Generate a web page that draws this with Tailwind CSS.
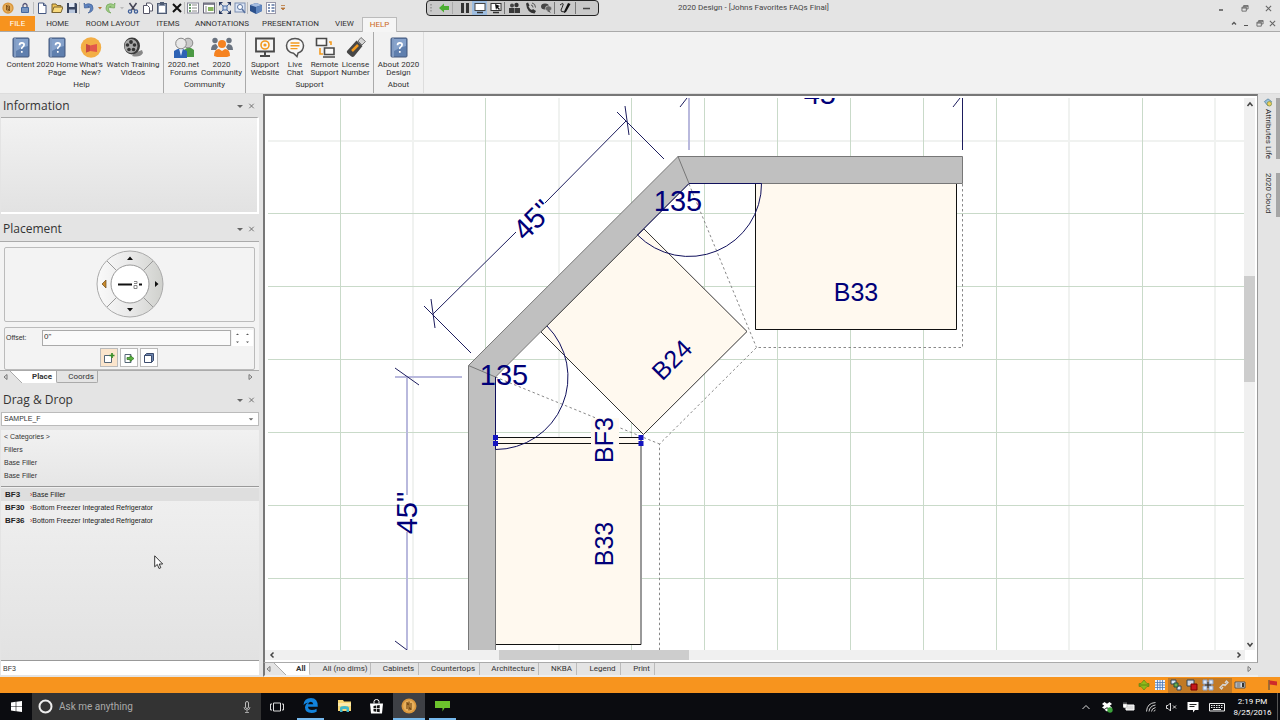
<!DOCTYPE html>
<html lang="en">
<head>
<meta charset="utf-8">
<title>2020 Design - [Johns Favorites FAQs Final]</title>
<script src="https://cdn.jsdelivr.net/npm/@tailwindcss/browser@4"></script>
</head>
<body class="flex h-screen flex-col overflow-hidden bg-[#e4e4e4] font-['Roboto','Noto_Sans',sans-serif] text-[8px] leading-[8px] text-[#333]">

<svg class="hidden" aria-hidden="true">
  <symbol id="book" viewBox="0 0 18 21"><rect x="1" y="1" width="16" height="19" rx="1" fill="#5f7fae" stroke="#44597d"/><path d="M3 1v19" stroke="#a7bbd8"/><path d="M4 2h12v7q-6 1-12 5z" fill="#86a2cb"/><path d="M7.500 8.200q0-2.400 2.300-2.400t2.300 2q0 1.300-1.300 2.100t-1 2.100M9.800 14v1.700" stroke="#fff" stroke-width="1.700" fill="none"/></symbol>
  <symbol id="coin" viewBox="0 0 16 16"><circle cx="8" cy="8" r="7.500" fill="#d9963c"/><circle cx="8" cy="8" r="5.800" fill="#e8b05c"/><path d="M6 4v7M8 3.500v9M10 5v7M6 5l2 2M8 9l2 3" stroke="#7a4d17" stroke-width="1.200" fill="none"/></symbol>
  <symbol id="restore" viewBox="0 0 8 8"><path d="M2.500 2.500v-2h5v4h-2M.5 2.500h5v4.500h-5zM.5 3.500h5M2.500 1.500h5" fill="none" stroke="#666"/></symbol>
  <symbol id="cross" viewBox="0 0 8 8"><path d="M1 1l6 6M7 1L1 7" fill="none" stroke="#666" stroke-width="1.200"/></symbol>
  <symbol id="down" viewBox="0 0 8 8"><path d="M1 3h6L4 6z" fill="#666"/></symbol>
</svg>

<!-- Title bar -->
<header class="flex h-4 shrink-0 items-center">
  <div class="flex w-[426px] shrink-0 items-center">
    <button aria-label="Application menu" class="flex w-4 justify-center"><svg class="h-3 w-3"><use href="#coin"/></svg></button>
    <button aria-label="Lock" class="flex w-[18px] justify-center border-r border-[#bbb]"><svg class="h-3 w-3" viewBox="0 0 12 12"><path d="M4 5V3q2-3 4 0v2" fill="none" stroke="#557" stroke-width="1.300"/><rect x="2" y="5" width="8" height="6" rx="1" fill="#4468a0"/><path d="M3 7h6M3 9h6" stroke="#a9c0e2"/></svg></button>
    <button aria-label="New" class="flex w-[15px] justify-center"><svg class="h-3 w-3" viewBox="0 0 12 12"><path d="M2.500 1h5l2.500 2.500V11.500h-7.500zM7.500 1v2.500H10" fill="#fff" stroke="#445780"/></svg></button>
    <button aria-label="Open" class="flex w-[15px] justify-center"><svg class="h-3 w-3" viewBox="0 0 12 12"><path d="M1 10.500V2h4l1 1.500h4V5" fill="#f3c553" stroke="#7a6430"/><path d="M1 10.500L3 5h9l-2 5.500z" fill="#f8d97b" stroke="#7a6430"/></svg></button>
    <button aria-label="Save" class="flex w-4 justify-center border-r border-[#bbb]"><svg class="h-3 w-3" viewBox="0 0 12 12"><path d="M1 1h9l1 1v9H1z" fill="#38455f"/><path d="M3 1h5.500v4H3z" fill="#dfe6f2"/><path d="M3 7.500h6V11H3z" fill="#b9c7dd"/></svg></button>
    <button aria-label="Undo" class="flex w-4 justify-center"><svg class="h-3 w-3" viewBox="0 0 12 12"><path d="M2 1l.5 5 5-.5-1.700-1.200Q9 4 8.500 7T6 11q5-1 5-5T7 1.800Q5 1.600 3.600 2.700z" fill="#5f84c1" stroke="#3d5d94" stroke-width=".7"/></svg></button>
    <button aria-label="Undo list" class="flex w-[7px] justify-center"><svg class="h-2 w-2 shrink-0" viewBox="0 0 8 8"><path d="M2 3h4L4 5.500z" fill="#b8763a"/></svg></button>
    <button aria-label="Redo" class="flex w-[15px] justify-center"><svg class="h-3 w-3" viewBox="0 0 12 12"><path d="M10 1l-.5 5-5-.5 1.700-1.200Q3 4 3.500 7T6 11Q1 10 1 6t4-4.200Q7 1.600 8.400 2.700z" fill="#9fce84" stroke="#6ea354" stroke-width=".7"/></svg></button>
    <button aria-label="Redo list" class="flex w-[7px] justify-center"><svg class="h-2 w-2 shrink-0" viewBox="0 0 8 8"><path d="M2 3h4L4 5.500z" fill="#bbb"/></svg></button>
    <button aria-label="Cut" class="flex w-[15px] justify-center"><svg class="h-3 w-3" viewBox="0 0 12 12"><path d="M2.500 1l5 7M9.500 1l-5 7" stroke="#445" stroke-width="1.500"/><circle cx="3" cy="9.500" r="1.600" fill="none" stroke="#3e5e98" stroke-width="1.300"/><circle cx="9" cy="9.500" r="1.600" fill="none" stroke="#3e5e98" stroke-width="1.300"/></svg></button>
    <button aria-label="Copy" class="flex w-[15px] justify-center"><svg class="h-3 w-3" viewBox="0 0 12 12"><path d="M4.500 1h4L10.500 3v6h-6z" fill="#fff" stroke="#556"/><path d="M1.500 3.500h4L7.500 5.500v6h-6z" fill="#fff" stroke="#556"/></svg></button>
    <button aria-label="Paste" class="flex w-[14px] justify-center"><svg class="h-3 w-3" viewBox="0 0 12 12"><rect x="1.500" y="1.500" width="9" height="10" fill="#8c98ad" stroke="#4e5b73"/><rect x="3" y="4" width="6" height="6.500" fill="#fff"/><rect x="4" y="0" width="4" height="3" fill="#4e5b73"/></svg></button>
    <button aria-label="Delete" class="flex w-4 justify-center border-r border-[#bbb]"><svg class="h-3 w-3" viewBox="0 0 12 12"><path d="M2 2l8 8M10 2l-8 8" stroke="#111" stroke-width="2"/></svg></button>
    <button aria-label="Items list" class="flex w-4 justify-center"><svg class="h-3 w-3" viewBox="0 0 12 12"><rect x=".5" y="1" width="11" height="10" fill="#fff" stroke="#889"/><path d="M2 3h2M2 6h2M2 9h2" stroke="#3c7d3c" stroke-width="1.500"/><path d="M5 3h5M5 6h5M5 9h5" stroke="#888"/></svg></button>
    <button aria-label="Properties" class="flex w-4 justify-center border-r border-[#bbb]"><svg class="h-3 w-3" viewBox="0 0 12 12"><rect x=".5" y="1" width="11" height="10" fill="#fff" stroke="#667"/><path d="M1 2h10" stroke="#667" stroke-width="1.500"/><rect x="5" y="5" width="5.500" height="4" fill="#86b45e"/><path d="M2 5h2M2 7h2M2 9h2" stroke="#888"/></svg></button>
    <button aria-label="Zoom extents" class="flex w-[15px] justify-center"><svg class="h-3 w-3" viewBox="0 0 12 12"><path d="M2 2l8 8M10 2l-8 8" stroke="#5570a0"/><rect x="4" y="4" width="4" height="4" fill="#cfdcf2" stroke="#4468a0"/><path d="M0 0h4L0 4zM12 0v4L8 0zM0 12V8l4 4zM12 12H8l4-4z" fill="#26365c"/></svg></button>
    <button aria-label="Zoom window" class="flex w-4 justify-center border-r border-[#bbb]"><svg class="h-3 w-3" viewBox="0 0 12 12"><rect x="1" y="1" width="10" height="9" fill="#dbe5f5" stroke="#7a8db0"/><circle cx="6" cy="5" r="2.500" fill="#fff" stroke="#5a73a0"/><path d="M8 7l3 4" stroke="#5a73a0" stroke-width="1.500"/></svg></button>
    <button aria-label="3D view" class="flex w-4 justify-center"><svg class="h-3 w-3" viewBox="0 0 12 12"><path d="M0 3l6-2 6 2v6l-6 3-6-3z" fill="#2c518c"/><path d="M0 3l6-2 6 2-6 2z" fill="#a4bce0"/><path d="M6 5v7l6-3V3z" fill="#5f86bf"/></svg></button>
    <button aria-label="Catalog list" class="flex w-[14px] justify-center"><svg class="h-3 w-3" viewBox="0 0 12 12"><rect x="1.500" y=".5" width="9" height="11" fill="#fff" stroke="#99a"/><path d="M3 3h2M3 6h2M3 9h2M6.500 3h3M6.500 6h3M6.500 9h3" stroke="#5a73a0" stroke-width="1.300"/></svg></button>
    <button aria-label="Customize" class="flex w-[10px] justify-center"><svg class="h-2 w-2" viewBox="0 0 8 8"><path d="M2 1.500h4M2 4h4L4 6z" stroke="#b8763a" stroke-width=".8" fill="#b8763a"/></svg></button>
  </div>
  <div class="flex h-4 w-[173px] shrink-0 items-center rounded-[4px] border border-[#222] bg-[#c9c9c9]">
    <svg class="h-3 w-[9px]" viewBox="0 0 9 12"><path d="M4 2v1.500M4 5v1.500M4 8v1.500" stroke="#777"/></svg>
    <button aria-label="Back" class="flex w-[17px] justify-center border-r border-[#aaa]"><svg class="h-3 w-3" viewBox="0 0 12 12"><path d="M1 6l5-4.500V4h5v4H6v2.500z" fill="#4cae32"/></svg></button>
    <button aria-label="Pause" class="flex w-[19px] justify-center pl-1"><svg class="h-3 w-3" viewBox="0 0 12 12"><path d="M2 1h3v10H2zM7 1h3v10H7z" fill="#333"/></svg></button>
    <button aria-label="Show screen" class="flex h-[14px] w-[15px] items-center justify-center bg-[#9dbde0]"><svg class="h-3 w-3" viewBox="0 0 12 12"><rect x="1" y="1.500" width="10" height="7" fill="#fff" stroke="#444"/><path d="M3 10.500h6" stroke="#333" stroke-width="1.500"/></svg></button>
    <button aria-label="Give control" class="flex w-[18px] justify-center border-r border-[#777]"><svg class="h-3 w-3" viewBox="0 0 12 12"><rect x="1" y="1.500" width="10" height="7" fill="#fff" stroke="#333"/><path d="M3 10.500h6" stroke="#333" stroke-width="1.500"/><path d="M5 2l5 2-2 1 2 2-1 1-2-2-1 2z" fill="#111"/></svg></button>
    <button aria-label="Attendees" class="flex w-[18px] justify-center"><svg class="h-3 w-3" viewBox="0 0 12 12"><circle cx="4" cy="3.500" r="2" fill="#444"/><circle cx="8.500" cy="3" r="2.200" fill="#333"/><path d="M1 11V6h5v5zM6.500 6H12v5H6.500z" fill="#3a3a3a"/></svg></button>
    <button aria-label="Audio" class="flex w-[15px] justify-center"><svg class="h-3 w-3" viewBox="0 0 12 12"><path d="M1 1.500l2-1 1.500 3-1 1Q4.500 7 7 8l1-1L11 9l-1.500 2.500Q2 11 1 1.500z" fill="#333"/><path d="M6 3q2 0 2 2.500M7 1q3.500.5 3.500 4.500" fill="none" stroke="#555"/></svg></button>
    <button aria-label="Chat" class="flex w-[17px] justify-center border-r border-[#777]"><svg class="h-3 w-3" viewBox="0 0 12 12"><ellipse cx="5" cy="4.500" rx="4" ry="3" fill="#444"/><ellipse cx="8.500" cy="6.500" rx="3.200" ry="2.700" fill="#666" stroke="#ddd" stroke-width=".6"/><path d="M9 8l2 3-4-2z" fill="#555"/></svg></button>
    <button aria-label="Draw" class="flex w-[21px] justify-center border-r border-[#777]"><svg class="h-3 w-3" viewBox="0 0 12 12"><path d="M1 3q4-3 3 0T2 8t4 2" fill="none" stroke="#222"/><path d="M9 1l2.500 1L7 10l-2 1 .5-2.500z" fill="#111"/></svg></button>
    <button aria-label="Minimize toolbar" class="flex w-5 justify-center"><svg class="h-3 w-3" viewBox="0 0 12 12"><path d="M3 6.500h7" stroke="#444" stroke-width="1.500"/></svg></button>
  </div>
  <h1 class="pl-[79px] text-[8px] leading-4 whitespace-nowrap text-[#444]">2020 Design - [Johns Favorites FAQs Final]</h1>
  <div class="ml-auto flex items-center gap-4 pr-2">
    <button aria-label="Minimize"><svg class="h-2 w-2" viewBox="0 0 8 8"><path d="M2 6h4" stroke="#555" stroke-width="1.500"/></svg></button>
    <button aria-label="Restore"><svg class="h-[7px] w-2"><use href="#restore"/></svg></button>
    <button aria-label="Close"><svg class="h-[7px] w-[7px]"><use href="#cross"/></svg></button>
  </div>
</header>

<!-- Ribbon tabs -->
<nav class="flex h-4 shrink-0 items-end border-b border-[#aaa] text-center whitespace-nowrap" role="tablist">
  <button role="tab" class="h-[15px] w-[35px] bg-[#f7931e] text-white">FILE</button>
  <button role="tab" class="h-[15px] w-[45px]">HOME</button>
  <button role="tab" class="h-[15px] w-[66px]">ROOM LAYOUT</button>
  <button role="tab" class="h-[15px] w-11">ITEMS</button>
  <button role="tab" class="h-[15px] w-16">ANNOTATIONS</button>
  <button role="tab" class="h-[15px] w-[73px]">PRESENTATION</button>
  <button role="tab" class="h-[15px] w-[35px]">VIEW</button>
  <button role="tab" aria-selected="true" class="-mb-px h-[15px] w-[35px] border border-b-0 border-[#bbb] bg-[#f5f5f5] text-[#cc6a1c]">HELP</button>
  <div class="ml-auto flex h-4 items-center gap-[5px] pr-1">
    <button aria-label="Collapse ribbon"><svg class="h-2 w-2" viewBox="0 0 8 8"><path d="M2 5.500L4 3.500l2 2" fill="none" stroke="#555" stroke-width="1.300"/></svg></button>
    <button aria-label="Minimize document"><svg class="h-2 w-2" viewBox="0 0 8 8"><path d="M1 6.500h4" stroke="#555"/></svg></button>
    <button aria-label="Restore document"><svg class="h-[7px] w-2"><use href="#restore"/></svg></button>
    <button aria-label="Close document"><svg class="h-[7px] w-[7px]"><use href="#cross"/></svg></button>
  </div>
</nav>

<!-- Ribbon -->
<section class="flex h-[62px] shrink-0 border-b border-[#ddd] bg-[#f2f2f2] text-center whitespace-nowrap">
  <div class="flex w-[164px] flex-col border-r border-[#aaa]">
    <div class="flex h-[49px] pt-[5px]">
      <button class="flex w-[39px] flex-col items-center gap-[3px] pl-[2px]"><svg class="h-[21px] w-[18px]"><use href="#book"/></svg><span>Content</span></button>
      <button class="flex w-9 flex-col items-center gap-[3px]"><svg class="h-[21px] w-[18px]"><use href="#book"/></svg><span>2020 Home<br>Page</span></button>
      <button class="flex w-8 flex-col items-center gap-[3px]"><svg class="h-[21px] w-[22px]" viewBox="0 0 22 21"><circle cx="11" cy="10.500" r="10.200" fill="#f3ae45"/><path d="M6 7l4 1.500 7-1.500v8l-7-1-4 1.500z" fill="#e2574c"/><path d="M6 7l4 1.500v5.500l-4 1.500z" fill="#c94a42"/></svg><span>What's<br>New?</span></button>
      <button class="flex w-[52px] flex-col items-center gap-[3px]"><svg class="h-[21px] w-[22px]" viewBox="0 0 22 21"><path d="M10 19q8 2 11-3l-1-3-8 3z" fill="#888"/><ellipse cx="10" cy="9" rx="8" ry="8.500" fill="#3c3c3c"/><ellipse cx="9" cy="9" rx="6.500" ry="7" fill="#a9a9a9"/><circle cx="9" cy="5" r="1.900" fill="#333"/><circle cx="5.500" cy="8" r="1.800" fill="#333"/><circle cx="12.500" cy="8" r="1.800" fill="#333"/><circle cx="7" cy="12.500" r="1.800" fill="#333"/><circle cx="11.500" cy="12.500" r="1.800" fill="#333"/></svg><span>Watch Training<br>Videos</span></button>
    </div>
    <span>Help</span>
  </div>
  <div class="flex w-[82px] flex-col border-r border-[#aaa]">
    <div class="flex h-[49px] pt-[5px] pl-px">
      <button class="flex w-[37px] flex-col items-center gap-[3px]"><svg class="h-[21px] w-[22px]" viewBox="0 0 22 21"><path d="M11 20v-7q5-5 10 0v7z" fill="#4c9a45"/><circle cx="15" cy="6" r="4.800" fill="#c9c9c9" stroke="#888"/><path d="M1 21v-7q6-5 13 0v7z" fill="#2e63b5"/><path d="M6 11.500h4L8 19z" fill="#dce8fa"/><circle cx="8" cy="6.500" r="5.300" fill="#e8e8e8" stroke="#888"/></svg><span>2020.net<br>Forums</span></button>
      <button class="flex w-[39px] flex-col items-center gap-[3px]"><svg class="h-[21px] w-[22px]" viewBox="0 0 22 21"><g fill="#6a7380"><circle cx="4" cy="3.500" r="2.700"/><circle cx="18" cy="3.500" r="2.700"/><path d="M0 13q0-6 5-6l2 3-2 3zM22 13q0-6-5-6l-2 3 2 3z"/></g><circle cx="11" cy="7" r="4" fill="#f58220"/><path d="M3 19q0-7 5-7l3 2 3-2q5 0 5 7l-3 1H6z" fill="#f58220"/></svg><span>2020<br>Community</span></button>
    </div>
    <span>Community</span>
  </div>
  <div class="flex w-32 flex-col border-r border-[#aaa]">
    <div class="flex h-[49px] pt-[5px] pl-[2px]">
      <button class="flex w-[34px] flex-col items-center gap-[3px]"><svg class="h-[21px] w-5" viewBox="0 0 20 21"><path d="M1 1.500h18v13H1z" fill="#f6f6f6" stroke="#4a4a4a" stroke-width="1.800"/><path d="M10 15v3M5 19h10" stroke="#4a4a4a" stroke-width="2"/><circle cx="10" cy="8" r="4" fill="none" stroke="#f39a1e" stroke-width="1.600"/><circle cx="10" cy="8" r="1.600" fill="#f39a1e"/></svg><span>Support<br>Website</span></button>
      <button class="flex w-[26px] flex-col items-center gap-[3px]"><svg class="h-[21px] w-5" viewBox="0 0 20 21"><path d="M10 1.500c5 0 8.500 3 8.500 7S16 15 13 16l-1 3.500-3.500-3.300C4 15.500 1.500 12.500 1.500 8.500s3.500-7 8.500-7z" fill="#f8f8f8" stroke="#555" stroke-width="1.500"/><path d="M5.500 6h9M5.500 8.800h9M5.500 11.600h7" stroke="#f39a1e" stroke-width="1.400"/></svg><span>Live<br>Chat</span></button>
      <button class="flex w-[33px] flex-col items-center gap-[3px]"><svg class="h-[21px] w-5" viewBox="0 0 20 21"><path d="M1.500 1.500h10v7h-10zM9.500 11h9.500v6.500H9.500z" fill="#fafafa" stroke="#4a4a4a" stroke-width="1.600"/><path d="M8 20h12" stroke="#4a4a4a" stroke-width="1.500"/><path d="M5 11v6h3M14 5h2v3" fill="none" stroke="#f39a1e" stroke-width="1.600"/></svg><span>Remote<br>Support</span></button>
      <button class="flex w-[29px] flex-col items-center gap-[3px]"><svg class="h-[21px] w-5" viewBox="0 0 20 21"><path d="M12 4l3-3.500 4.500 4L16 8z" fill="#d5d5d5" stroke="#777"/><path d="M1 14L10.500 3.500l6 5.500L8 19.500q-1.500 1-3-.3L1.300 16q-.8-1-.3-2z" fill="#474747"/><path d="M6 14l6-6" stroke="#f39a1e" stroke-width="2.500"/></svg><span>License<br>Number</span></button>
    </div>
    <span>Support</span>
  </div>
  <div class="flex w-[50px] flex-col border-r border-[#ddd]">
    <div class="flex h-[49px] justify-center pt-[5px]">
      <button class="flex flex-col items-center gap-[3px]"><svg class="h-[21px] w-[18px]"><use href="#book"/></svg><span>About 2020<br>Design</span></button>
    </div>
    <span>About</span>
  </div>
</section>

<!-- Work area -->
<main class="flex min-h-0 flex-1">
  <aside class="flex w-[263px] shrink-0 flex-col pr-1">
    <div class="flex h-[23px] shrink-0 items-center pl-[3px]"><h2 class="flex-1 font-['Open_Sans',sans-serif] text-[12px] leading-4">Information</h2>
      <button aria-label="Information menu" class="mr-1"><svg class="h-2 w-2"><use href="#down"/></svg></button><button aria-label="Close Information" class="mr-1"><svg class="h-[6px] w-[7px]"><use href="#cross"/></svg></button></div>
    <div class="ml-px h-[97px] shrink-0 border-t border-r-2 border-b-2 border-t-[#aaa] border-r-white border-b-white bg-linear-to-b from-[#f2f2f2] to-[#e2e2e2]"></div>

    <div class="mt-[3px] flex h-6 shrink-0 items-center pl-[3px]"><h2 class="flex-1 font-['Open_Sans',sans-serif] text-[12px] leading-4">Placement</h2>
      <button aria-label="Placement menu" class="mr-1"><svg class="h-2 w-2"><use href="#down"/></svg></button><button aria-label="Close Placement" class="mr-1"><svg class="h-[6px] w-[7px]"><use href="#cross"/></svg></button></div>
    <div class="flex h-[129px] shrink-0 flex-col gap-[5px] border-t border-[#aaa] bg-[#f3f3f3] px-1 pt-[5px]">
      <div class="flex h-[75px] justify-center rounded-[2px] border border-[#bbb] pt-[2px]">
        <svg class="h-[68px] w-[68px]" viewBox="0 0 68 68">
          <defs><linearGradient id="dial" x1="0" x2="1"><stop offset="0" stop-color="#fafafa"/><stop offset=".5" stop-color="#e9e9e9"/><stop offset="1" stop-color="#cfd0cc"/></linearGradient></defs>
          <circle cx="34" cy="34" r="33" fill="url(#dial)" stroke="#aaa"/><circle cx="34" cy="34" r="19" fill="#fff" stroke="#999"/>
          <path d="M11 11l9.500 9.500M57 11l-9.500 9.500M11 57l9.500-9.500M57 57l-9.500-9.500" stroke="#999"/>
          <path d="M31 10h6l-3-3.500zM31 58h6l-3 3.500zM59 31v6l3.500-3z" fill="#111"/><path d="M10 30v8l-4-4z" fill="#c98a2c" stroke="#6b4a1c" stroke-width=".7"/>
          <path d="M22 34.500h14M43 34.500h3" stroke="#111" stroke-width="1.800"/><path d="M38 31.500h3v2h-3M38 35.500h3v3h-3z" fill="none" stroke="#888"/>
        </svg>
      </div>
      <div class="h-[43px] rounded-[2px] border border-[#bbb] px-px pt-[2px] font-['Liberation_Sans',sans-serif]">
        <div class="flex items-start">
          <label for="offset" class="w-[36px] pt-1 text-[7px]">Offset:</label>
          <input id="offset" value="0&quot;" class="h-4 min-w-0 flex-1 border border-[#aaa] bg-[#fafafa] px-px pb-1 text-[8px]">
          <button aria-label="Step offset" class="ml-px flex h-4 w-[21px] items-center justify-center bg-white"><svg class="h-3 w-5" viewBox="0 0 20 12"><path d="M3 3h3L4.500 1.500zM3 9.500h3L4.500 11zM13 3h3L14.500 1.500zM13 9.500h3L14.500 11z" fill="#555"/></svg></button>
        </div>
        <div class="mt-[2px] flex justify-center gap-[2px] pr-[2px]">
          <button aria-label="Add item" class="flex h-[19px] w-[18px] items-center justify-center border border-[#bbb] bg-[#fbe5cc]"><svg class="h-3 w-3" viewBox="0 0 12 12"><path d="M1.500 3.500h7v7h-7z" fill="#fff" stroke="#567"/><path d="M9 1v5M6.500 3.500h5" fill="none" stroke="#3a8f2a" stroke-width="1.700"/></svg></button>
          <button aria-label="Insert item" class="flex h-[19px] w-[18px] items-center justify-center border border-[#bbb] bg-white"><svg class="h-3 w-3" viewBox="0 0 12 12"><path d="M2 2.500h6v8H2z" fill="#fff" stroke="#567"/><path d="M4 5.500h3V3.500L11 6.500l-4 3v-2H4z" fill="#59b23f" stroke="#2d6e1c" stroke-width=".7"/></svg></button>
          <button aria-label="Replace item" class="flex h-[19px] w-[18px] items-center justify-center border border-[#bbb] bg-white"><svg class="h-3 w-3" viewBox="0 0 12 12"><path d="M1.500 3.500l2-2h7v7l-2 2z" fill="#6f87b0" stroke="#3c4c6e"/><path d="M1.500 3.500h7v7h-7z" fill="#fff" stroke="#3c4c6e"/></svg></button>
        </div>
      </div>
    </div>
    <div class="flex h-[13px] shrink-0 items-center border-t border-[#aaa] whitespace-nowrap" role="tablist">
      <svg class="h-3 w-[10px]" viewBox="0 0 10 12"><path d="M7 3.500v5L4 6z" fill="none" stroke="#777"/></svg>
      <button role="tab" aria-selected="true" class="flex h-full items-center bg-white pr-1"><svg class="h-3 w-[22px]" viewBox="0 0 22 12"><path d="M0 0l12 12H0z" fill="#e4e4e4" /><path d="M0 0l12 12" stroke="#aaa"/></svg><b class="font-bold">Place</b></button>
      <button role="tab" class="h-full w-[42px] rounded-b-[2px] border-x border-b border-[#aaa] pl-2">Coords</button>
      <svg class="mr-1 ml-auto h-3 w-2" viewBox="0 0 8 12"><path d="M2 3.500v5L5 6z" fill="none" stroke="#777"/></svg>
    </div>

    <div class="mt-1 flex h-[25px] shrink-0 items-center pl-[3px]"><h2 class="flex-1 font-['Open_Sans',sans-serif] text-[12px] leading-4">Drag &amp; Drop</h2>
      <button aria-label="Drag and Drop menu" class="mr-1"><svg class="h-2 w-2"><use href="#down"/></svg></button><button aria-label="Close Drag and Drop" class="mr-1"><svg class="h-[6px] w-[7px]"><use href="#cross"/></svg></button></div>
    <div class="ml-px flex h-[14px] shrink-0 items-center border border-[#bbb] bg-white pr-1 font-['Liberation_Sans',sans-serif]">
      <select aria-label="Catalog" class="h-3 flex-1 appearance-none bg-white px-[2px] text-[7px]"><option>SAMPLE_F</option></select>
      <svg class="h-[6px] w-[6px]"><use href="#down"/></svg>
    </div>
    <div class="ml-px mt-1 flex h-[57px] shrink-0 flex-col border-b border-[#999] bg-linear-to-b from-[#f1f1f1] to-[#e6e6e6] pl-[3px] font-['Liberation_Sans',sans-serif] text-[7px] leading-[13px]">
      <a href="#">&lt; Categories &gt;</a><a href="#">Fillers</a><a href="#">Base Filler</a><a href="#">Base Filler</a>
    </div>
    <div class="ml-px min-h-0 flex-1 bg-linear-to-b from-[#f0f0f0] to-[#e2e2e2] pt-px font-['Liberation_Sans',sans-serif] text-[7px] leading-[13px] text-[#222]">
      <table class="w-full">
        <tr class="bg-[#dedede]"><th class="w-[29px] pl-1 text-left text-[8px]">BF3</th><td><span class="text-[#b22]">›</span>Base Filler</td></tr>
        <tr><th class="pl-1 text-left text-[8px]">BF30</th><td><span class="text-[#b22]">›</span>Bottom Freezer Integrated Refrigerator</td></tr>
        <tr><th class="pl-1 text-left text-[8px]">BF36</th><td><span class="text-[#b22]">›</span>Bottom Freezer Integrated Refrigerator</td></tr>
      </table>
    </div>
    <input aria-label="Item code" value="BF3" class="mb-[2px] ml-px h-[15px] shrink-0 border-t border-[#999] bg-white px-[2px] font-['Liberation_Sans',sans-serif] text-[7px]">
  </aside>

  <section class="flex min-w-0 flex-1 flex-col">
    <div class="flex min-h-0 flex-1 flex-col border-t-2 border-r border-b border-l-2 border-[#777] border-r-[#999] border-b-[#aaa] bg-white pt-[2px]">
      <div class="flex min-h-0 flex-1">
        <div class="min-w-0 flex-1 pl-[3px]">
        <svg class="h-full w-full" role="img" aria-label="Floor plan">
          <g transform="translate(-268 -98)" fill="none" font-family="'Liberation Sans', sans-serif">
            <path d="M413 90v570M559 90v570M1069 90v570M1215 90v570M260 141h1000" stroke="#f0f2f0" stroke-width="2"/>
            <path d="M340.500 90v570M485.500 90v570M631.500 90v570M704.500 90v570M777.500 90v570M850.500 90v570M923.500 90v570M996.500 90v570M1142.500 90v570M260 213.500h1000M260 286.500h1000M260 359.500h1000M260 432.500h1000M260 505.500h1000M260 578.500h1000" stroke="#c9dac9"/>
            <!-- cabinets -->
            <path d="M755.500 183.500H956.500V329.500H755.500z" fill="#fff9ef" stroke="#111"/>
            <path d="M644 229L747 331.500 643.500 434.500 541 332z" fill="#fff9ef" stroke="#333"/>
            <path d="M495.500 437.500H641V644.500H495.500z" fill="#fff9ef" stroke="#111"/>
            <path d="M641 444V644" stroke="#999" stroke-width="2"/>
            <path d="M495.500 443.500H641" stroke="#111"/>
            <!-- walls -->
            <path d="M468.500 655V365.500L678 156.500H962.500V183.500H689L495.500 377V655z" fill="#c0c0c0" stroke="#777"/>
            <path d="M678 156.500L689 183.500M468.500 365.500L495.500 377" stroke="#777"/>
            <!-- countertop overhang -->
            <path d="M962.500 184V347.500H756.500L659.500 444V655M689 184L756.500 347.500M495.500 377L659.500 444" stroke="#888" stroke-dasharray="2.500 2.500"/>
            <!-- corner angles -->
            <path d="M761.500 183.500A72.500 72.500 0 0 1 637.500 235L689 183.500zM547 326A72.500 72.500 0 0 1 495.500 449.500V377" stroke="#10105c"/>
            <!-- dimensions -->
            <path d="M689 98v52M407 377V495M407 532V650M395 377h67" stroke="#b9b9dd" stroke-width="2"/>
            <path d="M962.500 98v52M687 98l-7 9M960 98l-7 9M395 368l24 17M395 641l12 9M433 314L516 232M545 203L626 121M424 306l47 47M431 299l4 29M617 112l47 47M625 106l4 29" stroke="#1d1d5e"/>
            <path d="M591 418h28v45h-28z" fill="#fffaf2"/>
            <path d="M493 435h5v5h-5zM493 441h5v5h-5zM638.500 435h5v5h-5zM638.500 441h5v5h-5z" fill="#1414c0"/>
            <g fill="#000078" text-anchor="middle">
              <g font-size="29"><text x="678" y="211">135</text><text x="504" y="385">135</text><text x="825" y="104">45"</text>
              <text transform="translate(417 513) rotate(-90)">45"</text><text transform="translate(540 227) rotate(-45)">45"</text></g>
              <g font-size="25"><text x="856" y="301">B33</text><text transform="translate(613 440) rotate(-90)">BF3</text><text transform="translate(613 544) rotate(-90)">B33</text><text transform="translate(678 366) rotate(-45)">B24</text></g>
            </g>
          </g>
        </svg>
        </div>
        <div class="mr-[2px] flex w-[11px] flex-col items-center justify-between bg-[#f0f0f0]">
          <svg class="h-3 w-2" viewBox="0 0 8 12"><path d="M1.500 8L4 5l2.500 3" fill="none" stroke="#444" stroke-width="1.500"/></svg>
          <div class="flex w-full flex-1 flex-col pt-[166px]"><div class="h-[106px] bg-[#cdcdcd]"></div></div>
          <svg class="h-3 w-2" viewBox="0 0 8 12"><path d="M1.500 5L4 8l2.500-3" fill="none" stroke="#444" stroke-width="1.500"/></svg>
        </div>
      </div>
      <div class="mr-3 mb-[2px] flex h-[10px] shrink-0 items-center bg-[#f0f0f0] pl-[3px]">
        <svg class="h-2 w-2" viewBox="0 0 8 8"><path d="M5.500 1.500L3 4l2.500 2.500" fill="none" stroke="#444" stroke-width="1.500"/></svg>
        <div class="flex h-full flex-1 pl-[223px]"><div class="w-[190px] bg-[#cdcdcd]"></div></div>
        <svg class="mr-[2px] h-2 w-2" viewBox="0 0 8 8"><path d="M2.500 1.500L5 4 2.500 6.500" fill="none" stroke="#444" stroke-width="1.500"/></svg>
      </div>
    </div>
    <div class="flex h-[14px] shrink-0 border-b-2 border-l-2 border-[#eee] border-l-[#777] whitespace-nowrap" role="tablist">
      <svg class="h-3 w-[9px]" viewBox="0 0 9 12"><path d="M5 3.500v5L2 6z" fill="none" stroke="#777"/></svg>
      <button role="tab" aria-selected="true" class="flex w-[35px] items-center bg-white"><svg class="h-3 w-[22px]" viewBox="0 0 22 12"><path d="M0 0l12 12H0z" fill="#e4e4e4"/><path d="M0 0l12 12" stroke="#aaa"/></svg><b>All</b></button>
      <button role="tab" class="w-[62px] rounded-b-[2px] border-x border-[#bbb] pl-[10px]">All (no dims)</button>
      <button role="tab" class="w-12 border-r border-[#bbb] pl-2">Cabinets</button>
      <button role="tab" class="w-[61px] border-r border-[#bbb] pl-2">Countertops</button>
      <button role="tab" class="w-[59px] border-r border-[#bbb] pl-2">Architecture</button>
      <button role="tab" class="w-[38px] border-r border-[#bbb] pl-2">NKBA</button>
      <button role="tab" class="w-11 border-r border-[#bbb] pl-2">Legend</button>
      <button role="tab" class="w-[34px] border-r border-[#bbb] pl-2">Print</button>
      <svg class="mr-1 ml-auto h-3 w-2" viewBox="0 0 8 12"><path d="M2 3.500v5L5 6z" fill="none" stroke="#777"/></svg>
    </div>
  </section>

  <aside class="flex w-[22px] shrink-0 items-start justify-end gap-[3px] pt-1">
    <div class="flex flex-col items-center gap-[14px] whitespace-nowrap">
      <button class="flex h-[61px] flex-col items-center gap-[2px]"><svg class="h-[10px] w-[10px]" viewBox="0 0 10 10"><path d="M1 4l4-3 4 3-4 5z" fill="#9cc3dd" stroke="#5a88a6"/><circle cx="6.500" cy="6.500" r="2.500" fill="#f0cf5a" stroke="#8a9a54"/></svg><span class="[writing-mode:vertical-rl]">Attributes Life</span></button>
      <button class="[writing-mode:vertical-rl]">2020 Cloud</button>
    </div>
    <div class="flex w-1 flex-col gap-[14px]"><div class="h-[61px] bg-[#a6a6a6]"></div><div class="h-11 bg-[#a6a6a6]"></div></div>
  </aside>
</main>

<!-- Status bar -->
<div class="flex h-4 shrink-0 items-center justify-end bg-[#f7941e]">
  <button aria-label="Snap level" class="flex w-4 justify-center"><svg class="h-3 w-3" viewBox="0 0 12 12"><path d="M6 1l3 3.500h2v3H9L6 11 3 7.500H1v-3h2z" fill="#8dbb1b" stroke="#567a10" stroke-width=".6"/><path d="M1 6h10" stroke="#567a10" stroke-width=".8"/></svg></button>
  <button aria-label="Grid" class="flex w-4 justify-center"><svg class="h-3 w-3" viewBox="0 0 12 12"><path d="M1 1h10v10H1z" fill="#e9f1fb"/><path d="M1 3.500h10M1 6h10M1 8.500h10M3.500 1v10M6 1v10M8.500 1v10" stroke="#4a78b8" stroke-width=".8"/></svg></button>
  <div class="flex h-[15px] items-center bg-[#c27a26]">
    <button aria-label="Attach" class="flex w-4 justify-center"><svg class="h-3 w-3" viewBox="0 0 12 12"><path d="M1 1h5v4H1zM7 7h4v4H7z" fill="#d9e7f7" stroke="#345"/><path d="M4 4h4v4H4z" fill="#6cb04c" stroke="#254"/></svg></button>
    <button aria-label="Collision" class="flex w-4 justify-center"><svg class="h-3 w-3" viewBox="0 0 12 12"><path d="M1 1h7v6H1z" fill="#cdd7e8" stroke="#345"/><path d="M5 5h6v6H5z" fill="#c4161c" stroke="#700"/></svg></button>
    <button aria-label="Snap" class="flex w-4 justify-center"><svg class="h-3 w-3" viewBox="0 0 12 12"><path d="M1 1h4v4H1zM7 1h4v4H7zM1 7h4v4H1zM7 7h4v4H7z" fill="#dce8f8" stroke="#8aa2c8"/><path d="M6 3v6M3 6h6" stroke="#234"/></svg></button>
    <button aria-label="Link" class="flex w-4 justify-center"><svg class="h-3 w-3" viewBox="0 0 12 12"><path d="M5 8L3.500 10 2 8.500 5 5.500l1 1M7 4l1.500-2L10 3.500 7 6.500l-1-1" fill="none" stroke="#d6d6d6" stroke-width="1.300"/></svg></button>
  </div>
  <button aria-label="Keyboard" class="mr-4 flex w-4 justify-center"><svg class="h-3 w-3" viewBox="0 0 12 12"><path d="M1 3h10v6H1z" fill="#d5d9de" stroke="#555"/><path d="M2.500 5h4M2.500 7h4" stroke="#555"/><path d="M8 4h2v4H8z" fill="#333"/></svg></button>
  <button aria-label="Flag" class="flex w-4 justify-center"><svg class="h-3 w-3" viewBox="0 0 12 12"><path d="M3 1v10" stroke="#444"/><path d="M3.500 1.500l7.500 1v4l-7.500-1z" fill="#cf2a2a"/></svg></button>
</div>

<!-- Taskbar -->
<footer class="flex h-[27px] shrink-0 items-center bg-[#0b0c10] text-white">
  <button aria-label="Start" class="flex w-8 justify-center"><svg class="h-[11px] w-[11px]" viewBox="0 0 11 11"><path d="M0 1.500l4.700-.7v4.400H0zM5.300.7L11 0v5.200H5.300zM0 5.800h4.700v4.400L0 9.500zM5.300 5.800H11V11l-5.700-.7z" fill="#fff"/></svg></button>
  <div class="flex h-full w-[229px] items-center bg-[#333] pr-[10px] pl-[6px]">
    <svg class="h-[15px] w-[15px]" viewBox="0 0 15 15"><circle cx="7.500" cy="7.500" r="6" fill="none" stroke="#eee" stroke-width="2"/></svg>
    <input aria-label="Search" placeholder="Ask me anything" class="min-w-0 flex-1 bg-transparent pl-[6px] text-[10px] leading-3 placeholder:text-[#aaa]">
    <svg class="h-3 w-2" viewBox="0 0 8 12"><rect x="2.500" y=".5" width="3" height="7" rx="1.500" fill="none" stroke="#bbb"/><path d="M1 6q0 3 3 3t3-3M4 9v2.500M2 11.500h4" fill="none" stroke="#bbb" stroke-width=".8"/></svg>
  </div>
  <button aria-label="Task view" class="flex w-8 justify-center"><svg class="h-3 w-[14px]" viewBox="0 0 14 12"><path d="M3.500 2h7v8h-7zM2 3H.5v6H2M12 3h1.500v6H12" fill="none" stroke="#ddd"/></svg></button>
  <div class="flex h-full items-stretch">
    <button aria-label="Edge" class="mx-1 flex w-[27px] items-center justify-center border-b-2 border-[#76b9ed]"><svg class="h-[15px] w-[15px]" viewBox="0 0 15 15"><path d="M.5 7Q1 0 8 0t6.800 8.700H5Q5.300 12 9 12q2.500 0 4.600-1.200v3Q11 15 8.500 15 2 14.500 2 9.500 2.200 6 5.500 4.500 2 5 .5 7zM5 6.300h5.300Q10 3.700 7.800 3.700T5 6.300z" fill="#1283dc"/></svg></button>
    <button aria-label="File Explorer" class="flex w-8 items-center justify-center pb-px"><svg class="h-[14px] w-[15px]" viewBox="0 0 15 14"><path d="M1 1h5l1 1.500h7V12H1z" fill="#f8d775"/><path d="M1 4h13v3H1z" fill="#fbe9a9"/><path d="M3 13V9q0-2 4.500-2T12 9v4H9.500v-3h-4v3z" fill="#3fb6c9"/></svg></button>
    <button aria-label="Store" class="flex w-8 items-center justify-center pb-px"><svg class="h-[15px] w-[15px]" viewBox="0 0 15 15"><path d="M1 4.500h13L13 14.500H2z" fill="#fff"/><path d="M5 4.500V2.500q0-2 2.500-2t2.500 2v2" fill="none" stroke="#fff"/><path d="M4.500 7l2.500-.4v2.700H4.500zM7.700 6.500l3-.4v3.200h-3zM4.500 10h2.500v2.700l-2.500-.4zM7.700 10h3v3.200l-3-.4z" fill="#111"/></svg></button>
    <button aria-label="2020 Design" class="ml-px flex w-8 items-center justify-center border-b-2 border-[#76b9ed] bg-[#3e4045]"><svg class="h-4 w-4"><use href="#coin"/></svg></button>
    <button aria-label="Messages" class="mx-1 flex w-[27px] items-center justify-center border-b-2 border-[#76b9ed]"><svg class="h-3 w-[15px]" viewBox="0 0 15 12"><path d="M0 1h15v7H9.500L7.500 11.500V8H0z" fill="#6cc32c"/></svg></button>
  </div>
  <div class="ml-auto flex items-center">
    <button aria-label="Show hidden icons" class="flex w-5 justify-center"><svg class="h-2 w-[10px]" viewBox="0 0 10 8"><path d="M1.500 6L5 2.500 8.500 6" fill="none" stroke="#ddd"/></svg></button>
    <button aria-label="Dropbox" class="flex w-[22px] justify-center"><svg class="h-3 w-3" viewBox="0 0 12 12"><path d="M3.500 1L6 2.700 8.500 1 11 3 8.700 4.700 11 6.500 8.500 8 6 6.300 3.500 8 1 6.500l2.300-1.800L1 3zM3.500 8.700L6 7.200l2.500 1.500L6 10.500z" fill="#fff"/><circle cx="9" cy="9" r="2.700" fill="#3ba33b"/></svg></button>
    <button aria-label="Battery" class="flex w-[22px] justify-center"><svg class="h-3 w-3" viewBox="0 0 12 12"><path d="M3 4h8v5H3z" fill="#ddd" stroke="#fff"/><path d="M0 3h4v3q-2 2-4 0zM1 1v2M3 1v2" fill="#fff" stroke="#aaa" stroke-width=".6"/></svg></button>
    <button aria-label="Network" class="flex w-[22px] justify-center"><svg class="h-3 w-3" viewBox="0 0 12 12"><path d="M1.500 10.500Q2 2 10.500 1.500M4 10.500Q4.500 5 10.500 4M6.500 10.500q0-3 4-4M9 10.500q0-1.200 1.500-1.500" fill="none" stroke="#ccc"/></svg></button>
    <button aria-label="Volume muted" class="flex w-[18px] justify-center"><svg class="h-3 w-3" viewBox="0 0 12 12"><path d="M1.500 4.500h1.500L5.500 2v8L3 7.500H1.500zM8 4.500l3 3M11 4.500l-3 3" fill="none" stroke="#ddd"/></svg></button>
    <button aria-label="Notifications" class="flex w-[25px] justify-center"><svg class="h-3 w-3" viewBox="0 0 12 12"><path d="M.5 1h11v8H8l-2 2.500V9H.5z" fill="#fff"/><path d="M2.500 3.500h7M2.500 5.500h5" stroke="#222"/></svg></button>
    <button aria-label="Touch keyboard" class="flex w-[23px] justify-center"><svg class="h-3 w-4" viewBox="0 0 16 12"><path d="M.5 2.500h15v7.500H.5z" fill="none" stroke="#eee"/><path d="M2 4.500h12M2 6.500h12" stroke="#eee" stroke-dasharray="1.500 1"/><path d="M4 8.500h8" stroke="#eee"/></svg></button>
    <div class="w-[49px] text-center text-[8px] leading-[11px] whitespace-nowrap">2:19 PM<br>8/25/2016</div>
    <div class="h-[27px] w-[3px] border-l border-[#555]"></div>
  </div>
</footer>

<!-- Mouse pointer -->
<svg class="pointer-events-none absolute top-[555px] left-[154px] h-[15px] w-[10px]" viewBox="0 0 10 15"><path d="M.7.8v11l2.600-2.400L5 13.500l1.800-.8L5.200 9h3.500z" fill="#fff" stroke="#222" stroke-width=".9"/></svg>
</body>
</html>
